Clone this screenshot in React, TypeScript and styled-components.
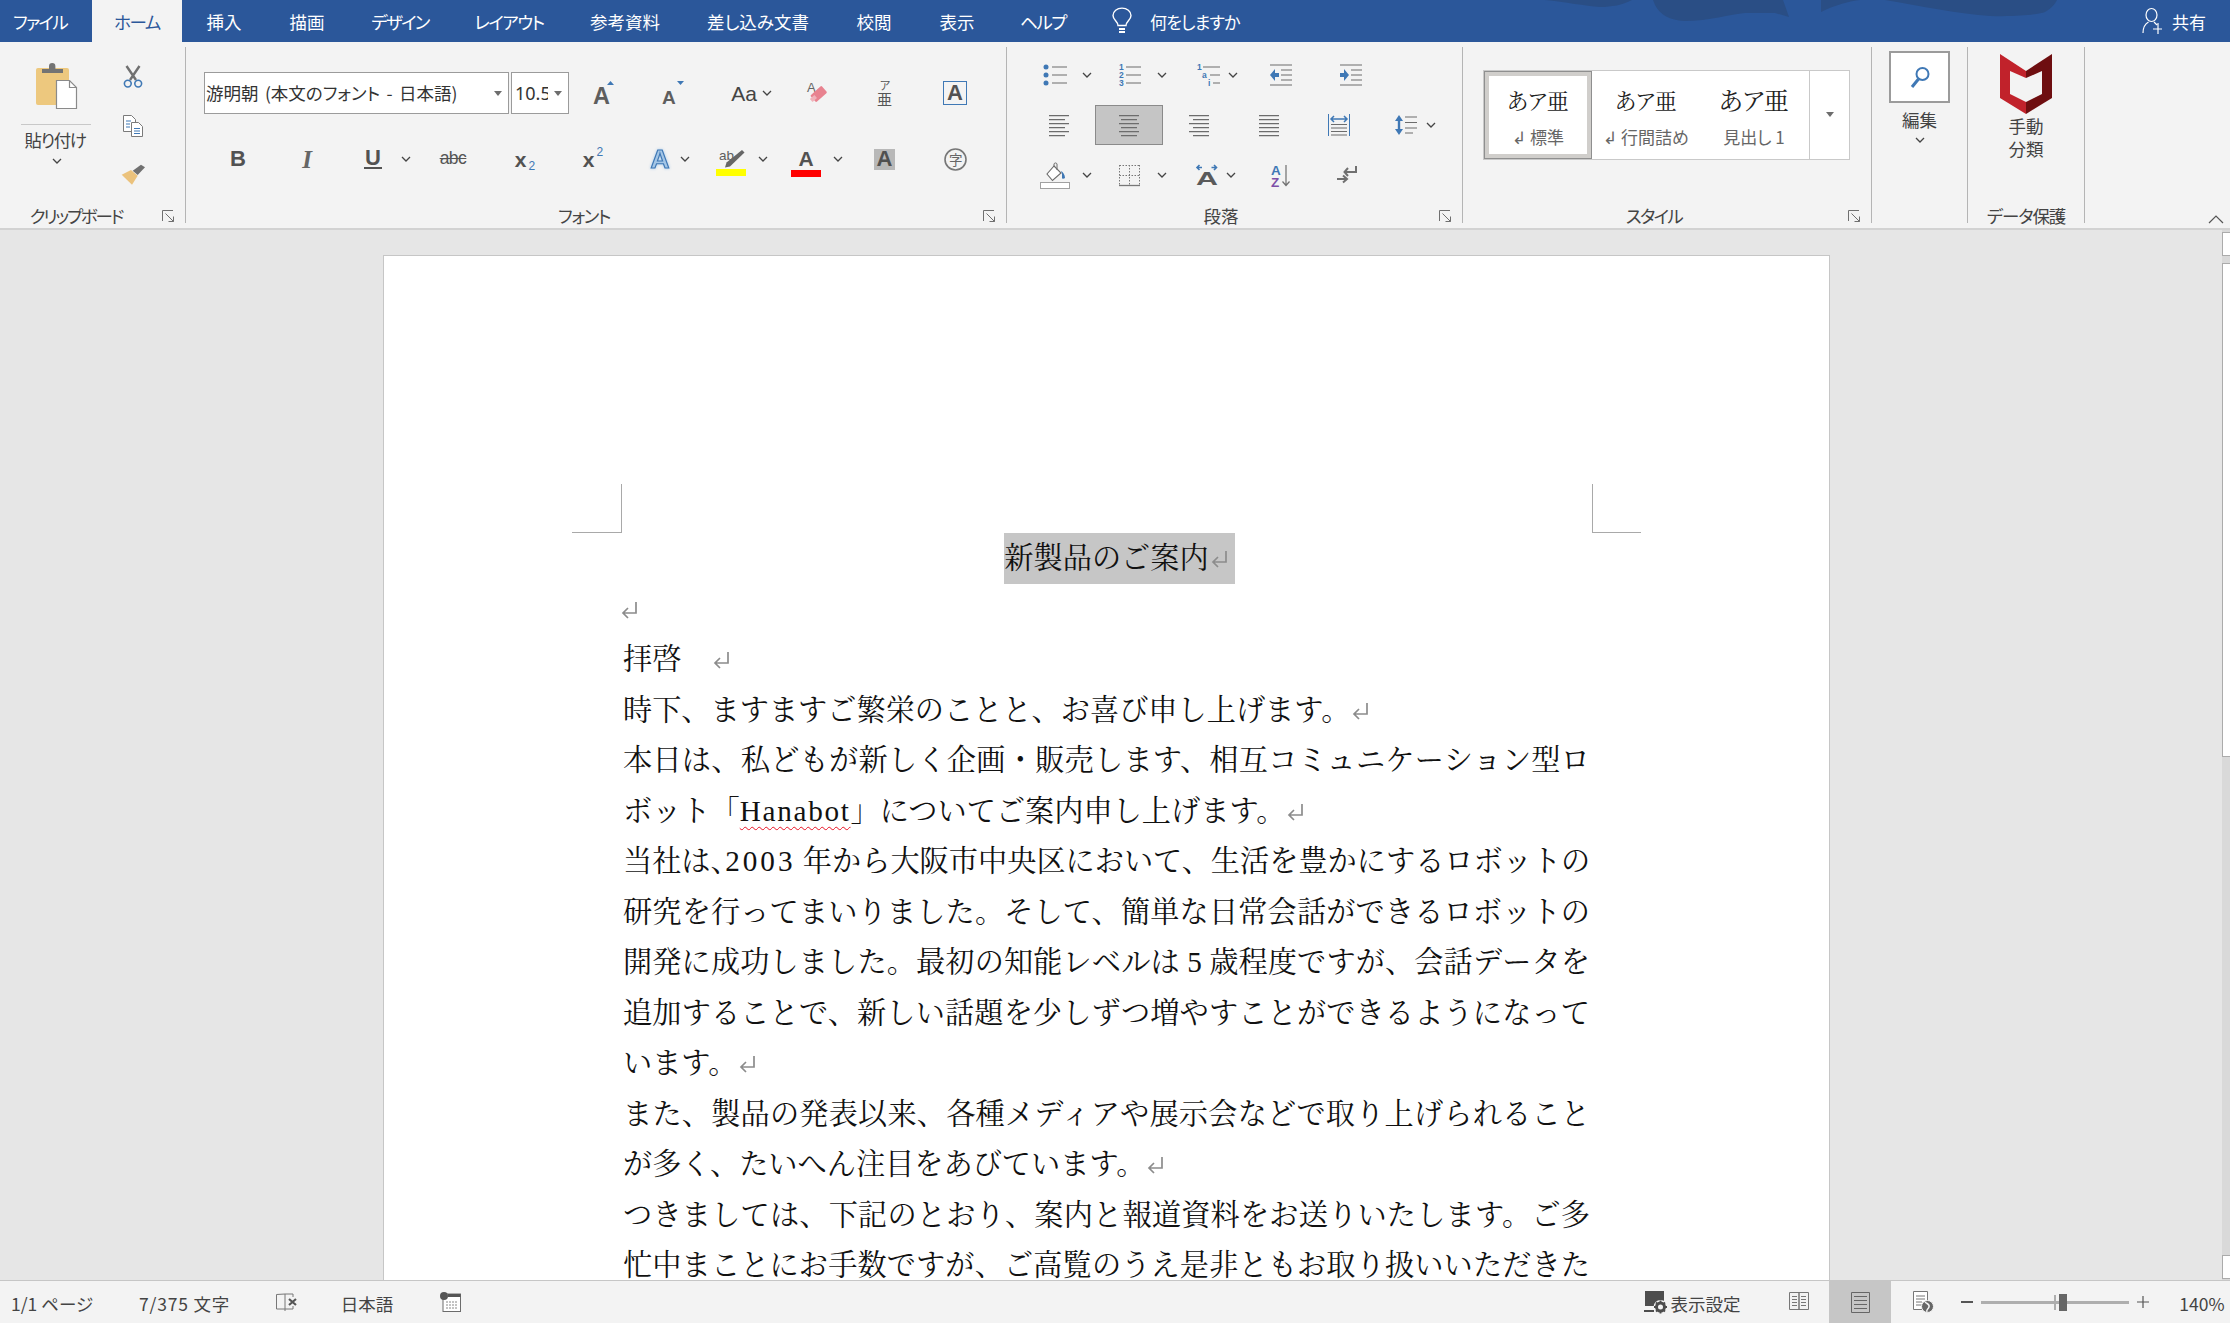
import React, { ReactNode } from "react";
import styled, { createGlobalStyle } from "styled-components";

const UI = `"Noto Sans CJK JP","Noto Sans",sans-serif`;
const DOCF = `"Liberation Serif","Noto Serif CJK JP","Noto Sans CJK JP",serif`;
const GR = "#5e5e5e";
const BL = "#3f78b5";
const LN = "#6c6c6c";

const Global = createGlobalStyle`
  html, body { margin: 0; padding: 0; width: 2230px; height: 1323px; overflow: hidden; background: #e6e6e6; }
  #root { width: 2230px; height: 1323px; }
  * { box-sizing: border-box; }
`;

const Shell = styled.div`
  width: 2230px; height: 1323px; display: flex; flex-direction: column;
  font-family: ${UI}; font-feature-settings: "palt"; color: #444; font-size: 17.5px;
`;

/* ---------- generic row of tools placed by their centre ---------- */
const Row = styled.div<{ $h: number; $mt?: number }>`
  display: flex; align-items: center; height: ${p => p.$h}px; margin-top: ${p => p.$mt ?? 0}px; flex: none;
`;
const Slot = styled.div<{ $w: number; $ml: number }>`
  flex: none; width: ${p => p.$w}px; margin-left: ${p => p.$ml}px;
  display: flex; align-items: center; justify-content: center; white-space: nowrap;
`;
type Item = [number, number, ReactNode];
function Tools({ origin, h, mt, items }: { origin: number; h: number; mt?: number; items: Item[] }) {
  let cur = origin;
  return (
    <Row $h={h} $mt={mt}>
      {items.map(([cx, w, node], i) => {
        const ml = cx - w / 2 - cur;
        cur = cx + w / 2;
        return <Slot key={i} $w={w} $ml={ml}>{node}</Slot>;
      })}
    </Row>
  );
}

/* ---------- title bar / tabs ---------- */
const TabBar = styled.div`
  position: relative; flex: none; height: 42px; background: #2b579a; display: flex; align-items: stretch;
  color: #fff; overflow: hidden;
`;
const Waves = styled.svg`position: absolute; left: 0; top: 0; pointer-events: none;`;
const Tab = styled.div<{ $w: number; $active?: boolean; $mr?: number; $ls?: number }>`
  position: relative; flex: none; width: ${p => p.$w}px; margin-right: ${p => p.$mr ?? 0}px;
  display: flex; align-items: center; justify-content: center; font-size: 17.5px;
  letter-spacing: ${p => p.$ls ?? 0}px;
  background: ${p => (p.$active ? "#f3f3f3" : "transparent")};
  color: ${p => (p.$active ? "#2b579a" : "#fff")};
`;
const TellMe = styled.div`
  position: relative; display: flex; align-items: center; margin-left: 24px; gap: 18px; font-size: 17px; letter-spacing: -0.8px;
`;
const ShareBox = styled.div`
  position: relative; margin-left: auto; margin-right: 24px; display: flex; align-items: center; gap: 10px; font-size: 17px;
`;

/* ---------- ribbon ---------- */
const Ribbon = styled.div`
  flex: none; height: 188px; background: #f3f3f3; border-bottom: 2px solid #d2d2d2; display: flex;
`;
const Group = styled.div<{ $w: number; $pt?: number }>`
  flex: none; width: ${p => p.$w}px; padding-top: ${p => p.$pt ?? 0}px; display: flex; flex-direction: column;
`;
const Divider = styled.div`
  flex: none; width: 1px; margin: 5px 0 5px; background: #b4b4b4;
`;
const Footer = styled.div`margin-top: auto;`;
const GroupLabel = styled.span<{ $ls?: number }>`
  font-size: 17.5px; color: #444; line-height: 24px; letter-spacing: ${p => p.$ls ?? 0}px;
`;

const ClipBody = styled.div`display: flex; flex: none;`;
const PasteCol = styled.div`
  width: 114px; padding-top: 21px; display: flex; flex-direction: column; align-items: center;
`;
const PasteRule = styled.div`width: 70px; height: 1px; background: #c8c8c8; margin: 15px 2px 3px 0;`;
const PasteLabel = styled.div`line-height: 24px; color: #444; font-size: 17.5px; margin-right: 4px; letter-spacing: -1.4px;`;
const PasteChev = styled.div`margin-top: 6px;`;
const SmallCol = styled.div`
  width: 38px; padding-top: 10px; display: flex; flex-direction: column; align-items: center;
`;
const SmallBtn = styled.div`height: 49px; display: flex; align-items: center; justify-content: center;`;

const SelectBox = styled.div<{ $w: number }>`
  width: ${p => p.$w}px; height: 42px; background: #fff; border: 1.5px solid #9b9b9b;
  display: flex; align-items: center; justify-content: space-between; color: #333;
`;
const SelectText = styled.span`font-size: 17.5px; padding: 0 0 2px 1px; white-space: nowrap; word-spacing: 2.5px;`;
const SizeText = styled.span`
  font-family: "Noto Sans", sans-serif; font-size: 18px; width: 36px; overflow: hidden; padding-left: 3px; white-space: nowrap;
`;
const Tri = styled.span<{ $mr?: number }>`
  width: 0; height: 0; border: 4.5px solid transparent; border-top: 5px solid #6d6d6d; border-bottom: 0;
  margin-right: ${p => p.$mr ?? 6}px; flex: none;
`;
const Glyph = styled.span<{ $s: number; $c?: string; $w?: number; $i?: boolean; $serif?: boolean }>`
  font-family: ${p => (p.$serif ? `"Liberation Serif",serif` : `"Liberation Sans",sans-serif`)};
  font-size: ${p => p.$s}px; font-weight: ${p => p.$w ?? 700}; font-style: ${p => (p.$i ? "italic" : "normal")};
  color: ${p => p.$c ?? "#525252"}; line-height: 1; display: inline-block;
`;
const UnderGlyph = styled(Glyph)`border-bottom: 2px solid #525252; line-height: 18px; padding: 0 1px;`;
const Strike = styled(Glyph)`text-decoration: line-through; text-decoration-thickness: 1px; letter-spacing: -0.5px;`;
const Script = styled.span<{ $up?: boolean }>`
  font-family: "Liberation Sans", sans-serif; font-size: 12px; color: ${BL}; font-weight: 400; line-height: 14px;
  align-self: ${p => (p.$up ? "flex-start" : "flex-end")}; margin-left: 2px;
`;
const ScriptWrap = styled.div`display: flex; height: 28px; align-items: center;`;
const CharBox = styled.div`
  width: 24px; height: 24px; border: 1.5px solid ${BL}; display: flex; align-items: center; justify-content: center;
`;
const ShadeBox = styled.div`
  width: 21px; height: 21px; background: #b8b8b8; display: flex; align-items: center; justify-content: center;
`;
const ColorStack = styled.div`display: flex; flex-direction: column; align-items: center; width: 30px; margin-top: 6px;`;
const ColorBar = styled.div<{ $c: string }>`width: 30px; height: 7px; background: ${p => p.$c}; margin-top: 1px;`;
const ActiveAlign = styled.div`
  width: 68px; height: 40px; background: #c5c5c5; border: 1.5px solid #8a8a8a;
  display: flex; align-items: center; justify-content: center;
`;

const Gallery = styled.div`
  margin: 28px 0 0 20px; width: 367px; height: 90px; background: #fff; border: 1.5px solid #c9c9c9; display: flex;
`;
const StyleCell = styled.div<{ $sel?: boolean }>`
  flex: none; width: 108px; display: flex; flex-direction: column; align-items: center; justify-content: space-between;
  padding: ${p => (p.$sel ? "11px 0 5px" : "16px 0 10px")};
  border: ${p => (p.$sel ? "5px solid #d0cecb" : "0")};
  outline: ${p => (p.$sel ? "1px solid #8f8f8f" : "0")}; outline-offset: -1px;
`;
const StyleSample = styled.span<{ $s: number }>`
  font-family: ${DOCF}; font-size: ${p => p.$s}px; line-height: 30px; color: #222; white-space: nowrap;
`;
const StyleName = styled.span`font-size: 17px; color: #666; line-height: 24px; white-space: nowrap;`;
const GalleryMore = styled.div`
  margin-left: auto; width: 40px; border-left: 1px solid #c9c9c9; display: flex; justify-content: center; padding-top: 41px;
`;

const BigCol = styled.div`display: flex; flex-direction: column; align-items: center;`;
const EditBox = styled.div`
  width: 61px; height: 52px; background: #fff; border: 2.5px solid #9b9b9b; margin: 9px 0 5px;
  display: flex; align-items: center; justify-content: center;
`;
const BigLabel = styled.div`font-size: 17.5px; line-height: 23px; color: #444; text-align: center;`;
const CollapseCell = styled.div`flex: 1; display: flex; justify-content: flex-end; align-items: flex-end; padding: 0 6px 4px 0;`;

/* ---------- document ---------- */
const DocArea = styled.div`flex: 1; min-height: 0; display: flex; overflow: hidden; background: #e6e6e6;`;
const Canvas = styled.div`flex: 1; min-width: 0; padding: 25px 0 0 383px; overflow: hidden;`;
const Page = styled.div`
  width: 1447px; height: 1200px; background: #fff; border: 1px solid #c6c6c6; padding: 228px 188px 0;
`;
const CropRow = styled.div`display: flex; justify-content: space-between; height: 49px;`;
const Crop = styled.div<{ $right?: boolean }>`
  height: 49px; border-bottom: 1px solid #a9a9a9;
  ${p => (p.$right ? "width: 49px; border-left: 1px solid #a9a9a9;" : "width: 50px; border-right: 1px solid #a9a9a9;")}
`;
const TextCol = styled.div`
  margin: 0 51px; font-family: ${DOCF}; font-size: 29.2px; color: #111; font-feature-settings: normal;
`;
const Line = styled.div<{ $fill?: boolean; $center?: boolean }>`
  height: 50.5px; line-height: 50.5px; white-space: nowrap;
  text-align: ${p => (p.$center ? "center" : "left")};
  ${p => (p.$fill ? "text-align: justify; text-align-last: justify;" : "")}
`;
const Selected = styled.span`
  display: inline-block; background: #c6c6c6; padding-right: 7px; margin-right: -26px; height: 50.5px;
`;
const Misspelled = styled.span`
  letter-spacing: 1.7px; text-decoration: underline wavy #e81123 1px; text-underline-offset: 5px;
`;
const TightComma = styled.span`letter-spacing: -14.6px;`;
const Digits = styled.span`letter-spacing: 3px;`;
const MarkSvg = styled.svg<{ $flush?: boolean }>`
  display: inline-block; vertical-align: -1px; margin-left: ${p => (p.$flush ? -2 : 2)}px;
`;
const Mark = ({ flush }: { flush?: boolean }) => (
  <MarkSvg $flush={flush} width="17" height="20" viewBox="0 0 17 20" fill="none" stroke="#8c8c8c" strokeWidth="1.7">
    <path d="M15 2v11H2M7 8 2 13l5 5" />
  </MarkSvg>
);

const ScrollTrack = styled.div`
  flex: none; width: 8px; background: #d9d9d9; padding-top: 2px; display: flex; flex-direction: column;
`;
const ScrollBtn = styled.div<{ $mt?: number }>`
  height: 24px; margin-top: ${p => p.$mt ?? 0}px; background: #fff; border: 1px solid #ababab; border-right: 0;
`;
const ScrollThumb = styled.div`
  height: 494px; margin-top: 7px; background: #fff; border: 1.5px solid #ababab; border-right: 0;
`;

/* ---------- status bar ---------- */
const StatusBar = styled.div`
  flex: none; height: 43px; background: #f3f3f3; border-top: 1.5px solid #c6c6c6; color: #444; font-size: 17.5px;
`;
const StatusText = styled.span<{ $ls?: number }>`
  font-family: "Noto Sans CJK JP", sans-serif; font-size: 17.5px; color: #444; padding-top: 2px;
  letter-spacing: ${p => p.$ls ?? 0}px;
`;
const ViewActive = styled.div`
  width: 62px; height: 42px; background: #c6c6c6; display: flex; align-items: center; justify-content: center;
`;
const SliderTrack = styled.div`
  position: relative; width: 148px; height: 3px; background: #aeaeae;
`;
const SliderTick = styled.i`position: absolute; left: 73px; top: -6px; width: 1.5px; height: 15px; background: #aeaeae;`;
const SliderThumb = styled.i`position: absolute; left: 78px; top: -7px; width: 8px; height: 17px; background: #666;`;
const Ico = styled.svg`display: block; overflow: visible;`;
const EffectIco = styled(Ico)`filter: drop-shadow(0 0 1.5px #a6c9ea);`;

/* ---------- icon drawings ---------- */
const Chev = () => (
  <Ico width="10" height="6" viewBox="0 0 10 6" fill="none" stroke="#444" strokeWidth="1.3">
    <path d="M1 1l4 4 4-4" />
  </Ico>
);
const Launcher = () => (
  <Ico width="12" height="12" viewBox="0 0 12 12" fill="none" stroke="#6f6f6f" strokeWidth="1">
    <path d="M.5 11V.5H11M3.500 3.500l8 8M11.500 6.500v5h-5" />
  </Ico>
);
const Paste = () => (
  <Ico width="42" height="46" viewBox="0 0 42 46">
    <rect x="0" y="5" width="33" height="37" rx="2" fill="#edc87e" />
    <path d="M6 10V6h7V3.2a3.2 3.2 0 0 1 6.4 0V6H27v4z" fill="#737373" />
    <path d="M20.5 17.5h13l7 7v21h-20z" fill="#fff" stroke="#8a8a8a" strokeWidth="1.2" />
    <path d="M33.5 17.5v7h7" fill="none" stroke="#8a8a8a" strokeWidth="1.2" />
  </Ico>
);
const Scissors = () => (
  <Ico width="20" height="22" viewBox="0 0 20 22" fill="none">
    <path d="M3.5 0 13 14M16.5 0 7 14" stroke="#707070" strokeWidth="2.4" />
    <circle cx="4.8" cy="17.6" r="3.4" stroke={BL} strokeWidth="1.6" />
    <circle cx="15.2" cy="17.6" r="3.4" stroke={BL} strokeWidth="1.6" />
  </Ico>
);
const CopyIcon = () => (
  <Ico width="20" height="22" viewBox="0 0 20 22" fill="#fff" stroke="#7a7a7a" strokeWidth="1">
    <path d="M.5.5h8l4 4v12H.5z" />
    <path d="M8.5 7.5h7l4 4v10h-11z" />
    <path d="M3 6h5M3 9h4M3 12h4M11 13.5h6M11 16h6M11 18.5h6" stroke={BL} strokeWidth="1" fill="none" />
  </Ico>
);
const Painter = () => (
  <Ico width="24" height="22" viewBox="0 0 24 22">
    <path d="M.7 10.7 10 6l6.7 5.7-5.7 9z" fill="#ebc27c" />
    <path d="M11.7 6.7 20 .7 24 3.3 16.7 11z" fill="#707070" />
  </Ico>
);
const TxtA = ({ x, y, s, f = GR, w = 700 }: { x: number; y: number; s: number; f?: string; w?: number }) => (
  <text x={x} y={y} fontSize={s} fontWeight={w} fill={f} fontFamily="Liberation Sans">A</text>
);
const Grow = () => (
  <Ico width="24" height="26" viewBox="0 0 24 26">
    <TxtA x={0} y={24} s={23.5} />
    <path d="M14 5l3.5-4L21 5z" fill={BL} />
  </Ico>
);
const Shrink = () => (
  <Ico width="22" height="26" viewBox="0 0 22 26">
    <TxtA x={0} y={24} s={19} />
    <path d="M15 1h7l-3.5 4z" fill={BL} />
  </Ico>
);
const ClearFmt = () => (
  <Ico width="20" height="24" viewBox="0 0 20 24">
    <TxtA x={0} y={11} s={13} w={400} f="#666" />
    <rect x="4" y="9" width="15" height="9" rx="1.2" fill="#e8828f" transform="rotate(-42 11 13)" />
    <rect x="3.6" y="16" width="6" height="4" fill="#f0b2ba" transform="rotate(-42 6 18)" />
  </Ico>
);
const RubySvgText = styled.text`font-family: "Noto Sans CJK JP", sans-serif;`;
const Ruby = () => (
  <Ico width="20" height="26" viewBox="0 0 20 26">
    <RubySvgText x="5" y="10" fontSize="11" fill="#555">ア</RubySvgText>
    <RubySvgText x="2" y="25" fontSize="15" fill="#555">亜</RubySvgText>
  </Ico>
);
const TextEffect = () => (
  <EffectIco width="20" height="22" viewBox="0 0 20 22">
    <text x="0.5" y="19.5" fontSize="25" fontWeight="700" fontFamily="Liberation Sans" fill="#a4c6e6" stroke={BL} strokeWidth="1.1" textLength="19" lengthAdjust="spacingAndGlyphs">A</text>
  </EffectIco>
);
const HighlightPen = () => (
  <Ico width="30" height="19" viewBox="0 0 30 19">
    <text x="3" y="11" fontSize="13.5" fill="#5e5e5e" fontFamily="Liberation Sans">ab</text>
    <path d="M26 1l2.5 2.5L14 17.5l-5 1 1.5-5z" fill="#666" />
  </Ico>
);
const Enclosed = () => (
  <Ico width="23" height="23" viewBox="0 0 23 23" fill="none">
    <circle cx="11.5" cy="11.5" r="10.5" stroke="#777" strokeWidth="1.6" />
    <RubySvgText x="5" y="16.5" fontSize="13.5" fill="#666">字</RubySvgText>
  </Ico>
);
const Bullets = () => (
  <Ico width="24" height="20" viewBox="0 0 24 20">
    <g fill={BL}><circle cx="3" cy="2" r="2.5" /><circle cx="3" cy="10" r="2.5" /><circle cx="3" cy="18" r="2.5" /></g>
    <path d="M9 2h15M9 10h15M9 18h15" stroke={LN} strokeWidth="1.2" />
  </Ico>
);
const NumT = ({ x, y, c }: { x: number; y: number; c: string }) => (
  <text x={x} y={y} fontSize="8.5" fill={BL} fontFamily="Liberation Sans" fontWeight="700">{c}</text>
);
const Numbers = () => (
  <Ico width="23" height="22" viewBox="0 0 23 22">
    <NumT x={0} y={6} c="1" /><NumT x={0} y={14} c="2" /><NumT x={0} y={22} c="3" />
    <path d="M7 3h15M7 11h15M7 19h15" stroke={LN} strokeWidth="1.2" />
  </Ico>
);
const Multi = () => (
  <Ico width="24" height="22" viewBox="0 0 24 22">
    <NumT x={0} y={6} c="1" /><NumT x={5} y={14} c="a" /><NumT x={11} y={22} c="i" />
    <path d="M6 3h17M13 11h10M16 19h7" stroke={LN} strokeWidth="1.2" />
  </Ico>
);
const Indent = ({ inc }: { inc?: boolean }) => (
  <Ico width="22" height="22" viewBox="0 0 22 22">
    <path d="M0 1h22M11 6h11M11 11h11M11 16h11M0 21h22" stroke={LN} strokeWidth="1.2" />
    <path d={inc ? "M0 9h4V5l5 6-5 6v-4H0z" : "M9 9H5V5l-5 6 5 6v-4h4z"} fill={BL} />
  </Ico>
);
type Align = "l" | "c" | "r" | "j";
const AlignLines = ({ mode }: { mode: Align }) => {
  const ys = [0.6, 4.6, 8.6, 12.6, 16.6, 20.6];
  return (
    <Ico width="20" height="21" viewBox="0 0 20 21">
      <path
        d={ys.map((y, i) => {
          const short = i % 2 === 1 && mode !== "j";
          const w = short ? 16 : 20;
          const x = mode === "r" ? 20 - w : mode === "c" ? (20 - w) / 2 : 0;
          return `M${x} ${y}h${w}`;
        }).join("")}
        stroke={LN} strokeWidth="1.2"
      />
    </Ico>
  );
};
const Distribute = () => (
  <Ico width="22" height="22" viewBox="0 0 22 22">
    <path d="M.5 0v22M21.5 0v22" stroke={BL} strokeWidth="1" />
    <path d="M3 5h16M6 2 3 5l3 3M16 2l3 3-3 3" stroke={BL} strokeWidth="1.5" fill="none" />
    <path d="M3 10.5h16M3 14h16M3 17.500h16M3 21h16" stroke={LN} strokeWidth="1.2" />
  </Ico>
);
const LineSpacing = () => (
  <Ico width="22" height="22" viewBox="0 0 22 22">
    <path d="M4 5v12" stroke={BL} strokeWidth="2.4" />
    <path d="M0 7l4-6 4 6zM0 15l4 6 4-6z" fill={BL} />
    <path d="M10 3h12M10 8.500h12M10 14h12M10 19h8" stroke={LN} strokeWidth="1.2" />
  </Ico>
);
const Bucket = () => (
  <Ico width="30" height="27" viewBox="0 0 30 27">
    <path d="M14 4 21 11 12.500 18.500 7 12z" fill="#fff" stroke="#6c6c6c" strokeWidth="1.1" />
    <path d="M14 5V2a1.600 1.600 0 0 1 3 0v6" fill="none" stroke="#6c6c6c" strokeWidth="1" />
    <path d="M21 9c2 1 4 4 4 7-1 1-3 1-3 0v-4z" fill={BL} />
    <rect x=".5" y="20.500" width="29" height="6" fill="#fff" stroke="#a0a0a0" />
  </Ico>
);
const Borders = () => (
  <Ico width="21" height="21" viewBox="0 0 21 21" fill="none" stroke="#777" strokeWidth="1">
    <path d="M.5.5h20M.5 10.500h20M.5 0v21M10.500 0v21M20.500 0v21" strokeDasharray="1.500 1.500" />
    <path d="M0 20.500h21" strokeWidth="1.3" />
  </Ico>
);
const Phonetic = () => (
  <Ico width="22" height="22" viewBox="0 0 22 22">
    <text x="0" y="21" fontSize="19" fontWeight="700" fontFamily="Liberation Sans" fill="#5a5a5a" textLength="22" lengthAdjust="spacingAndGlyphs">A</text>
    <path d="M1 3.500h5M15.500 3.500h5M3.500 1 1 3.500 3.500 6M18 1l2.500 2.500L18 6" fill="none" stroke={BL} strokeWidth="1.6" />
  </Ico>
);
const Sort = () => (
  <Ico width="19" height="23" viewBox="0 0 19 23">
    <text x="0" y="11" fontSize="13.500" fontWeight="700" fontFamily="Liberation Sans" fill={BL}>A</text>
    <text x="0" y="23" fontSize="13.500" fontWeight="700" fontFamily="Liberation Sans" fill="#7d4fa8">Z</text>
    <path d="M15 1v20M11.500 17.500 15 21.500l3.500-4" fill="none" stroke="#707070" strokeWidth="1.2" />
  </Ico>
);
const ShowMarks = () => (
  <Ico width="20" height="18" viewBox="0 0 20 18" fill="none" stroke="#707070" strokeWidth="2">
    <path d="M19 0v6H8M11 2 7.500 6l3.500 4" />
    <path d="M0 13h9M6 9.500 10 13l-4 3.500" />
  </Ico>
);
const Magnifier = () => (
  <Ico width="20" height="23" viewBox="0 0 20 23" fill="none" stroke={BL}>
    <circle cx="12.500" cy="8" r="6" strokeWidth="2" />
    <path d="M8.500 13 2 21" strokeWidth="3" />
  </Ico>
);
const Shield = () => (
  <Ico width="52" height="60" viewBox="0 0 52 60">
    <path d="M0 0 26 17V60L0 44z" fill="#c1222b" />
    <path d="M52 0 26 17V60L52 44z" fill="#6e0e10" />
    <path d="M10 17 26 24V48L10 40z" fill="#f3f3f3" />
    <path d="M42 17 26 24V48L42 40z" fill="#f3f3f3" />
  </Ico>
);
const Collapse = () => (
  <Ico width="16" height="9" viewBox="0 0 16 9" fill="none" stroke="#555" strokeWidth="1.200">
    <path d="M1 8l7-7 7 7" />
  </Ico>
);
const Bulb = () => (
  <Ico width="20" height="27" viewBox="0 0 20 27" fill="none" stroke="#fff" strokeWidth="1.400">
    <path d="M6 17.500C6 13.500 1 12 1 7.500a8.500 7 0 0 1 18 0c0 4.500-5 6-5 10z" />
    <path d="M7 21h6M7 24h6" strokeWidth="2" />
  </Ico>
);
const Person = () => (
  <Ico width="20" height="26" viewBox="0 0 20 26" fill="none" stroke="#fff" strokeWidth="1.200">
    <ellipse cx="9.500" cy="7" rx="5.500" ry="6.500" />
    <path d="M1 25c0-5 2-9 5.500-11M12 14l3 3M16 15v11M11 21h9" />
  </Ico>
);
const BookX = () => (
  <Ico width="22" height="19" viewBox="0 0 22 19" fill="none" stroke="#777" strokeWidth="1">
    <path d="M.5 1.500 9 1v15H.5zM9 1h8v3M9 16h8v-3M9 16v2" />
    <path d="M13 6l7 6M20 6l-7 6" stroke="#555" strokeWidth="2.200" />
  </Ico>
);
const MacroIcon = () => (
  <Ico width="21" height="20" viewBox="0 0 21 20">
    <rect x="3" y="2" width="17.500" height="17.500" fill="#fff" stroke="#6c6c6c" />
    <rect x="8" y="2" width="12.500" height="3" fill="#555" />
    <circle cx="4" cy="4" r="4" fill="#555" />
    <path d="M6 10h12M6 13h12M6 16h12" stroke="#888" strokeDasharray="2 1" />
  </Ico>
);
const DisplayIcon = () => (
  <Ico width="25" height="23" viewBox="0 0 25 23">
    <path d="M1 0h19v15H1z" fill="#4d4d4d" />
    <path d="M0 20h10" stroke="#4d4d4d" strokeWidth="2" />
    <circle cx="16.500" cy="16" r="7" fill="#f3f3f3" />
    <circle cx="16.500" cy="16" r="4" fill="none" stroke="#4d4d4d" strokeWidth="3" />
    <path d="M16.500 9.500v13M10 16h13M12 11.500l9 9M21 11.500l-9 9" stroke="#4d4d4d" strokeWidth="1.800" strokeDasharray="2 9" strokeDashoffset="0" />
  </Ico>
);
const ReadIcon = () => (
  <Ico width="20" height="20" viewBox="0 0 20 20" fill="none" stroke="#777" strokeWidth="1">
    <path d="M.5.5h9.500v17H.5zM10 .5h9.500v17H10z" />
    <path d="M3 4.500h5M3 7.500h5M3 10.500h5M3 13.500h5M12 4.500h5M12 7.500h5M12 10.500h5M12 13.500h5" />
  </Ico>
);
const PrintIcon = () => (
  <Ico width="19" height="21" viewBox="0 0 19 21" fill="none" stroke="#666" strokeWidth="1">
    <path d="M.5.5h18v20H.5zM3 4.500h13M3 8.500h13M3 12.500h13M3 16.500h13" />
  </Ico>
);
const WebIcon = () => (
  <Ico width="21" height="22" viewBox="0 0 21 22">
    <path d="M.5.5h14v18H.5z" fill="#fff" stroke="#777" />
    <path d="M3 5h9M3 8h9M3 11h6M3 14h6" stroke="#777" />
    <circle cx="14.500" cy="15.500" r="6" fill="#666" stroke="#f3f3f3" />
    <path d="M12 11c2 2 5 2 4 5s-3 2-2 5" stroke="#f3f3f3" strokeWidth="1.500" fill="none" />
  </Ico>
);
const Plain = styled.span<{ $s: number; $c?: string }>`font-size: ${p => p.$s}px; color: ${p => p.$c ?? "#444"}; line-height: 1; font-family: "Liberation Sans", sans-serif;`;
const Dash = styled.i`display: block; width: 12px; height: 1.5px; background: #555;`;
const PlusMark = () => (
  <Ico width="12" height="12" viewBox="0 0 12 12" stroke="#555" strokeWidth="1.200"><path d="M0 6h12M6 0v12" /></Ico>
);

const tabs: [string, number, number?, boolean?, number?][] = [
  ["ファイル", 80, 12, false, -1.7], ["ホーム", 90, 0, true, -1.4], ["挿入", 84], ["描画", 82], ["デザイン", 104, 0, false, -1.7],
  ["レイアウト", 114, 0, false, -1.4], ["参考資料", 118], ["差し込み文書", 148], ["校閲", 84], ["表示", 82], ["ヘルプ", 90, 0, false, -1.4],
];

export default function App() {
  return (
    <Shell>
      <Global />
      <TabBar>
        <Waves width="2230" height="42" viewBox="0 0 2230 42" fill="#2a4e85">
          <path d="M1529 3 1545 0H1632C1622 5 1612 7 1600 7 1585 6 1565 2 1545 0Z" />
          <path d="M1653 0 1655 5C1660 15 1670 20 1684 21 1710 21 1730 14 1745 13H1775L1789 17 1783 0Z" />
          <path d="M1821 0V12C1835 5 1850 1 1860 0H1885C1920 6 1960 14 1990 16 2020 17 2040 14 2045 12 2052 8 2055 4 2057 0Z" />
        </Waves>
        {tabs.map(([t, w, mr, act, ls]) => (
          <Tab key={t} $w={w} $mr={mr} $active={act} $ls={ls}>{t}</Tab>
        ))}
        <TellMe><Bulb /><span>何をしますか</span></TellMe>
        <ShareBox><Person /><span>共有</span></ShareBox>
      </TabBar>

      <Ribbon>
        <Group $w={185}>
          <ClipBody>
            <PasteCol>
              <Paste />
              <PasteRule />
              <PasteLabel>貼り付け</PasteLabel>
              <PasteChev><Chev /></PasteChev>
            </PasteCol>
            <SmallCol>
              <SmallBtn><Scissors /></SmallBtn>
              <SmallBtn><CopyIcon /></SmallBtn>
              <SmallBtn><Painter /></SmallBtn>
            </SmallCol>
          </ClipBody>
          <Footer>
            <Tools origin={0} h={24} items={[
              [76, 100, <GroupLabel $ls={-2.2}>クリップボード</GroupLabel>],
              [168, 12, <Launcher />],
            ]} />
          </Footer>
        </Group>
        <Divider />

        <Group $w={820} $pt={30}>
          <Tools origin={186} h={42} items={[
            [356.5, 305, <SelectBox $w={305}><SelectText>游明朝 (本文のフォント - 日本語)</SelectText><Tri /></SelectBox>],
            [540, 58, <SelectBox $w={58}><SizeText>10.5</SizeText><Tri /></SelectBox>],
            [605, 24, <Grow />],
            [673, 22, <Shrink />],
            [744, 26, <Plain $s={21}>Aa</Plain>],
            [767, 10, <Chev />],
            [817, 20, <ClearFmt />],
            [885, 20, <Ruby />],
            [955, 24, <CharBox><Glyph $s={22}>A</Glyph></CharBox>],
          ]} />
          <Tools origin={186} h={42} mt={24} items={[
            [238, 20, <Glyph $s={22}>B</Glyph>],
            [307, 20, <Glyph $s={25} $serif $i $c="#666">I</Glyph>],
            [373, 20, <UnderGlyph $s={22} $w={700}>U</UnderGlyph>],
            [406, 10, <Chev />],
            [453, 26, <Strike $s={17.5} $w={400} $c="#555">abc</Strike>],
            [525, 24, <ScriptWrap><Glyph $s={21}>x</Glyph><Script>2</Script></ScriptWrap>],
            [593, 24, <ScriptWrap><Glyph $s={21}>x</Glyph><Script $up>2</Script></ScriptWrap>],
            [660, 20, <TextEffect />],
            [685, 10, <Chev />],
            [731, 30, <ColorStack><HighlightPen /><ColorBar $c="#ffff00" /></ColorStack>],
            [763, 10, <Chev />],
            [806, 30, <ColorStack><Glyph $s={21} $w={700}>A</Glyph><ColorBar $c="#ff0000" /></ColorStack>],
            [838, 10, <Chev />],
            [884.500, 21, <ShadeBox><Glyph $s={22} $c="#505050">A</Glyph></ShadeBox>],
            [955, 23, <Enclosed />],
          ]} />
          <Footer>
            <Tools origin={186} h={24} items={[
              [584, 80, <GroupLabel $ls={-1.4}>フォント</GroupLabel>],
              [989, 12, <Launcher />],
            ]} />
          </Footer>
        </Group>
        <Divider />

        <Group $w={455} $pt={10}>
          <Tools origin={1007} h={46} items={[
            [1055, 24, <Bullets />], [1087, 10, <Chev />],
            [1130, 23, <Numbers />], [1162, 10, <Chev />],
            [1209, 24, <Multi />], [1233, 10, <Chev />],
            [1281, 22, <Indent />],
            [1351, 22, <Indent inc />],
          ]} />
          <Tools origin={1007} h={46} mt={4} items={[
            [1059, 20, <AlignLines mode="l" />],
            [1129, 68, <ActiveAlign><AlignLines mode="c" /></ActiveAlign>],
            [1199, 20, <AlignLines mode="r" />],
            [1269, 20, <AlignLines mode="j" />],
            [1339, 22, <Distribute />],
            [1406, 22, <LineSpacing />], [1431, 10, <Chev />],
          ]} />
          <Tools origin={1007} h={46} mt={4} items={[
            [1055, 30, <Bucket />], [1087, 10, <Chev />],
            [1129.500, 21, <Borders />], [1162, 10, <Chev />],
            [1207, 22, <Phonetic />], [1231, 10, <Chev />],
            [1280, 19, <Sort />],
            [1347, 20, <ShowMarks />],
          ]} />
          <Footer>
            <Tools origin={1007} h={24} items={[
              [1221, 60, <GroupLabel>段落</GroupLabel>],
              [1445, 12, <Launcher />],
            ]} />
          </Footer>
        </Group>
        <Divider />

        <Group $w={408}>
          <Gallery>
            <StyleCell $sel><StyleSample $s={22}>あア亜</StyleSample><StyleName>↲ 標準</StyleName></StyleCell>
            <StyleCell><StyleSample $s={22}>あア亜</StyleSample><StyleName>↲ 行間詰め</StyleName></StyleCell>
            <StyleCell><StyleSample $s={25}>あア亜</StyleSample><StyleName>見出し 1</StyleName></StyleCell>
            <GalleryMore><Tri $mr={0} /></GalleryMore>
          </Gallery>
          <Footer>
            <Tools origin={1463} h={24} items={[
              [1654, 80, <GroupLabel $ls={-1.7}>スタイル</GroupLabel>],
              [1854, 12, <Launcher />],
            ]} />
          </Footer>
        </Group>
        <Divider />

        <Group $w={95}>
          <BigCol>
            <EditBox><Magnifier /></EditBox>
            <BigLabel>編集</BigLabel>
            <PasteChev><Chev /></PasteChev>
          </BigCol>
        </Group>
        <Divider />

        <Group $w={116} $pt={12}>
          <BigCol>
            <Shield />
            <BigLabel>手動<br />分類</BigLabel>
          </BigCol>
          <Footer>
            <Tools origin={1968} h={24} items={[[2026, 100, <GroupLabel $ls={-1.1}>データ保護</GroupLabel>]]} />
          </Footer>
        </Group>
        <Divider />
        <CollapseCell><Collapse /></CollapseCell>
      </Ribbon>

      <DocArea>
        <Canvas>
          <Page>
            <CropRow><Crop /><Crop $right /></CropRow>
            <TextCol>
              <Line $center><Selected>新製品のご案内<Mark /></Selected></Line>
              <Line><Mark flush /></Line>
              <Line>拝啓　<Mark /></Line>
              <Line>時下、ますますご繁栄のことと、お喜び申し上げます。<Mark /></Line>
              <Line $fill>本日は、私どもが新しく企画・販売します、相互コミュニケーション型ロ</Line>
              <Line>ボット「<Misspelled>Hanabot</Misspelled>」についてご案内申し上げます。<Mark /></Line>
              <Line $fill>当社は<TightComma>、</TightComma><Digits>2003</Digits> 年から大阪市中央区において、生活を豊かにするロボットの</Line>
              <Line $fill>研究を行ってまいりました。そして、簡単な日常会話ができるロボットの</Line>
              <Line $fill>開発に成功しました。最初の知能レベルは 5 歳程度ですが、会話データを</Line>
              <Line $fill>追加することで、新しい話題を少しずつ増やすことができるようになって</Line>
              <Line>います。<Mark /></Line>
              <Line $fill>また、製品の発表以来、各種メディアや展示会などで取り上げられること</Line>
              <Line>が多く、たいへん注目をあびています。<Mark /></Line>
              <Line $fill>つきましては、下記のとおり、案内と報道資料をお送りいたします。ご多</Line>
              <Line $fill>忙中まことにお手数ですが、ご高覧のうえ是非ともお取り扱いいただきた</Line>
            </TextCol>
          </Page>
        </Canvas>
        <ScrollTrack>
          <ScrollBtn />
          <ScrollThumb />
          <ScrollBtn $mt={498} />
        </ScrollTrack>
      </DocArea>

      <StatusBar>
        <Tools origin={0} h={42} items={[
          [52, 84, <StatusText>1/1 ページ</StatusText>],
          [184.500, 96, <StatusText $ls={0.8}>7/375 文字</StatusText>],
          [287, 22, <BookX />],
          [367, 56, <StatusText>日本語</StatusText>],
          [450, 21, <MacroIcon />],
          [1656, 25, <DisplayIcon />],
          [1705.500, 72, <StatusText>表示設定</StatusText>],
          [1798.500, 20, <ReadIcon />],
          [1860, 62, <ViewActive><PrintIcon /></ViewActive>],
          [1923, 21, <WebIcon />],
          [1967, 12, <Dash />],
          [2055, 148, <SliderTrack><SliderTick /><SliderThumb /></SliderTrack>],
          [2142.500, 12, <PlusMark />],
          [2202, 52, <StatusText>140%</StatusText>],
        ]} />
      </StatusBar>
    </Shell>
  );
}
